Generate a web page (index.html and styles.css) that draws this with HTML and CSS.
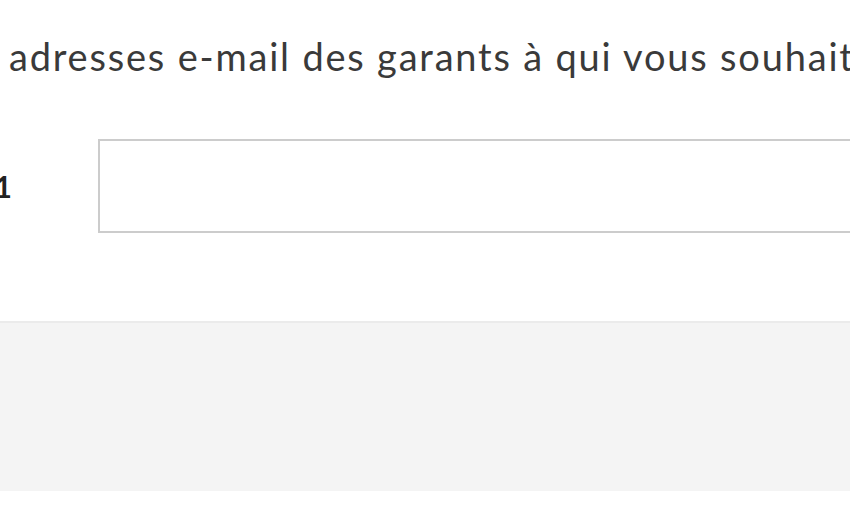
FILE: index.html
```html
<!DOCTYPE html>
<html lang="fr">
<head>
<meta charset="utf-8">
<link rel="stylesheet" href="styles.css">
</head>
<body>
<div class="page">
  <p class="intro">adresses e-mail des garants à qui vous souhaitez envoyer une demande</p>
  <div class="row">
    <label class="label" for="g1">Garant 1</label>
    <input class="field" id="g1" type="email">
  </div>
</div>
<div class="band"></div>
</body>
</html>
```
FILE: styles.css
```css
html, body { margin: 0; padding: 0; background: #fff; overflow: hidden; }
body { width: 850px; height: 530px; font-family: Lato, "Open Sans", sans-serif; color: #333; }
.page { height: 321px; overflow: hidden; }
.intro {
  margin: 0;
  padding: 32px 0 0 9px;
  font-size: 38px;
  font-weight: 400;
  letter-spacing: 1.8px;
  line-height: 48px;
  white-space: nowrap;
  color: #3a3a3a;
}
.row {
  display: flex;
  align-items: center;
  margin-top: 59px;
  margin-left: -88px;
}
.label {
  width: 100px;
  flex: none;
  text-align: right;
  font-weight: 700;
  font-size: 30px;
  color: #222;
  white-space: nowrap;
  overflow: hidden;
  direction: rtl;
}
.field {
  flex: none;
  margin-left: 86px;
  width: 900px;
  height: 94px;
  box-sizing: border-box;
  border: 2px solid #ccc;
  background: #fff;
  padding: 0;
  outline: none;
}
.band {
  height: 168px;
  background: #f4f4f4;
  border-top: 2px solid #ebebeb;
}
```
